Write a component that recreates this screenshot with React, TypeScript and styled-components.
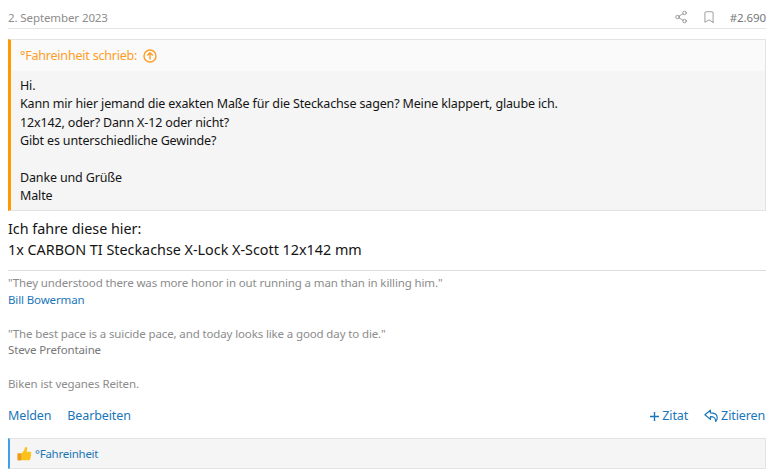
import React from 'react'
import styled, { createGlobalStyle } from 'styled-components'
import { Share2, Bookmark } from 'lucide-react'

const GlobalStyle = createGlobalStyle`
  html, body { margin: 0; padding: 0; background: #fff; }
  body { font-family: "Noto Sans", "Open Sans", sans-serif; color: #141414; overflow: hidden; }
`

const Post = styled.article`
  width: 758px;
  height: 474px;
  margin: 0 8px;
  display: flex;
  flex-direction: column;
`

const PostHeader = styled.header`
  height: 29px;
  box-sizing: border-box;
  border-bottom: 1px solid #e3e3e3;
  display: flex;
  align-items: center;
  justify-content: space-between;
  padding-top: 6px;
  font-size: 11.5px;
  letter-spacing: -0.1px;
  color: #8c8c8c;
`

const HeaderTools = styled.div`
  display: flex;
  align-items: center;
  gap: 14px;
  color: #777;
`

const Quote = styled.blockquote`
  margin: 10px 0 0;
  border: 1px solid #e3e3e3;
  border-left: 3px solid #f90;
  background: #f5f5f5;
`

const QuoteTitle = styled.div`
  height: 31px;
  box-sizing: border-box;
  padding: 0 9px;
  display: flex;
  align-items: center;
  gap: 6px;
  background: #fafafa;
  color: #fe9d25;
  font-size: 12.5px;
  letter-spacing: -0.2px;
`

const QuoteBody = styled.div`
  padding: 6px 9px 4px;
  font-size: 12.5px;
  letter-spacing: -0.15px;
  line-height: 18.4px;
  white-space: pre-line;
`

const Message = styled.div`
  margin-top: 7px;
  font-size: 14.35px;
  line-height: 21px;
`

const Signature = styled.aside`
  margin-top: 10px;
  padding-top: 4px;
  border-top: 1px solid #ddd;
  font-size: 11.5px;
  letter-spacing: -0.13px;
  line-height: 16.9px;
  color: #8c8c8c;
`

const SigLine = styled.div<{ $gap?: boolean }>`
  margin-top: ${(p) => (p.$gap ? '16.9px' : '0')};
`

const SigLink = styled.a`
  color: #1a76b8;
`

const SigName = styled.span`
  color: #777;
`

const Actions = styled.div`
  margin-top: 14px;
  padding: 0 1px 0 0;
  display: flex;
  justify-content: space-between;
  font-size: 12.5px;
  letter-spacing: -0.12px;
  line-height: 18px;
  color: #1a76b8;
`

const ActionGroup = styled.div`
  display: flex;
  gap: 16px;
`

const Action = styled.a`
  display: flex;
  align-items: center;
  gap: 2px;
  color: inherit;
`

const Reactions = styled.div`
  margin-top: 13px;
  height: 31px;
  box-sizing: border-box;
  border: 1px solid #e3e3e3;
  border-left: 2px solid #3ea0e6;
  background: #f5f5f5;
  display: flex;
  align-items: center;
  gap: 3px;
  padding-left: 7px;
  font-size: 11.5px;
  letter-spacing: -0.25px;
  color: #1a76b8;
`

const Thumb = () => (
  <svg width="15" height="16" viewBox="0 0 15 16">
    <path
      d="M4.4 7.6 7 4.6 8 1.6c.2-.9 1.9-.9 2.2.6.2 1.1-.1 2.3-.7 3.6h3.6c1.5 0 1.6 2 .5 2.3 1 .4.9 2-.1 2.2.7.6.5 1.8-.5 2.1.5.7.1 1.9-1 1.9H6.6c-1 0-1.5-.5-2.2-.6z"
      fill="#fcc21b"
    />
    <path d="M0.4 7.6c1.6-.5 3-.4 4.2 0v6.6c-1.3.4-2.8.4-4.2 0z" fill="#ef9d18" />
  </svg>
)

const UpCircle = () => (
  <svg width="14" height="14" viewBox="0 0 14 14" fill="none" stroke="currentColor" strokeWidth="1.4">
    <circle cx="7" cy="7" r="6" />
    <path d="M7 10.5V4M4.2 6.6 7 3.8l2.8 2.8" />
  </svg>
)

const PlusIcon = () => (
  <svg width="11" height="11" viewBox="0 0 11 11" stroke="currentColor" strokeWidth="1.4">
    <path d="M5.5 1v9M1 5.5h9" />
  </svg>
)

const ReplyIcon = () => (
  <svg width="15" height="14" viewBox="0 0 15 14" fill="none" stroke="currentColor" strokeWidth="1.2" strokeLinejoin="round">
    <path d="M6.4 1.2.9 5.8l5.5 4.6V7.6c2.8 0 5 .4 5.3 4.9 2.6-3.2 2.6-8.6-5.3-8.6z" />
  </svg>
)

export default function App() {
  return (
    <>
      <GlobalStyle />
      <Post>
        <PostHeader>
          <span>2. September 2023</span>
          <HeaderTools>
            <Share2 size={14} strokeWidth={1.2} />
            <Bookmark size={14} strokeWidth={1.2} />
            <span>#2.690</span>
          </HeaderTools>
        </PostHeader>
        <Quote>
          <QuoteTitle>
            °Fahreinheit schrieb:
            <UpCircle />
          </QuoteTitle>
          <QuoteBody>
            {`Hi.
Kann mir hier jemand die exakten Maße für die Steckachse sagen? Meine klappert, glaube ich.
12x142, oder? Dann X-12 oder nicht?
Gibt es unterschiedliche Gewinde?

Danke und Grüße
Malte`}
          </QuoteBody>
        </Quote>
        <Message>
          Ich fahre diese hier:
          <br />
          1x CARBON TI Steckachse X-Lock X-Scott 12x142 mm
        </Message>
        <Signature>
          <SigLine>"They understood there was more honor in out running a man than in killing him."</SigLine>
          <SigLine>
            <SigLink>Bill Bowerman</SigLink>
          </SigLine>
          <SigLine $gap>"The best pace is a suicide pace, and today looks like a good day to die."</SigLine>
          <SigLine>
            <SigName>Steve Prefontaine</SigName>
          </SigLine>
          <SigLine $gap>Biken ist veganes Reiten.</SigLine>
        </Signature>
        <Actions>
          <ActionGroup>
            <Action>Melden</Action>
            <Action>Bearbeiten</Action>
          </ActionGroup>
          <ActionGroup>
            <Action>
              <PlusIcon />
              Zitat
            </Action>
            <Action>
              <ReplyIcon />
              Zitieren
            </Action>
          </ActionGroup>
        </Actions>
        <Reactions>
          <Thumb />
          °Fahreinheit
        </Reactions>
      </Post>
    </>
  )
}
